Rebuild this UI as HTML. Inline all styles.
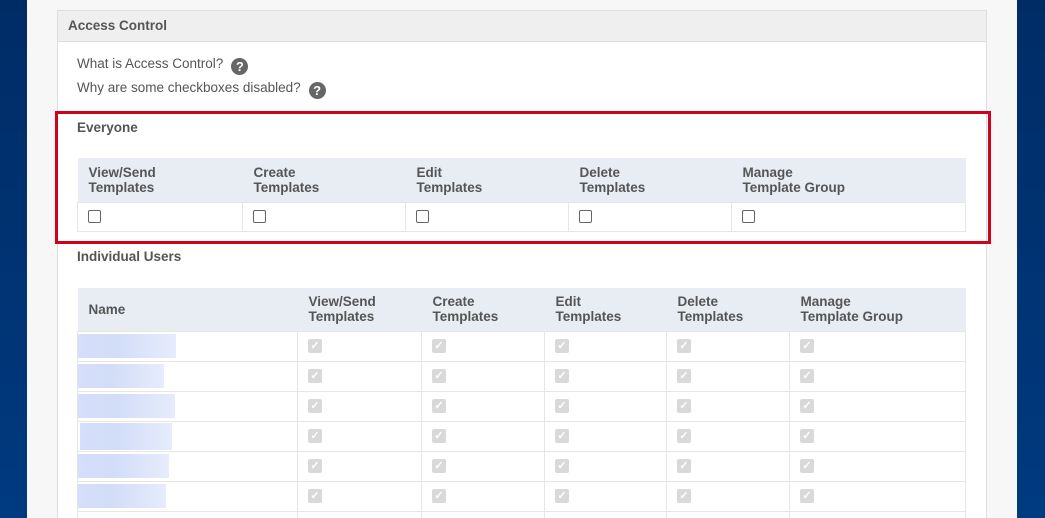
<!DOCTYPE html>
<html><head><meta charset="utf-8"><style>
*{box-sizing:border-box;margin:0;padding:0}
html,body{width:1045px;height:518px;overflow:hidden}
body{position:relative;font-family:"Liberation Sans",sans-serif;color:#555;font-size:13.5px;background:#003270}
.bgl{position:absolute;left:0;top:0;width:27px;height:518px;background:linear-gradient(#002c66,#003a80)}
.bgr{position:absolute;left:1017px;top:0;width:28px;height:518px;background:linear-gradient(#002c66,#003a80)}
.main{position:absolute;left:27px;top:0;width:990px;height:518px;background:#f7f7f7;overflow:hidden}
.panel{position:absolute;left:57px;top:10px;width:930px;height:508px;background:#fff;border:1px solid #ddd;border-bottom:none}
.ph{position:absolute;left:57px;top:10px;width:930px;height:32px;background:#efefef;border:1px solid #ddd;font-weight:bold;font-size:13.5px;padding:7px 10px;color:#555}
.t{position:absolute;font-size:13.5px;color:#555}
.q{display:inline-block;width:17px;height:17px;border-radius:50%;background:#666;color:#fff;font-weight:bold;font-size:13px;text-align:center;line-height:17px;vertical-align:-3px;margin-left:8px}
.red{position:absolute;left:55px;top:111px;width:936px;height:133px;border:3px solid #d0021b}
.b{font-weight:bold;font-size:13.5px;color:#555}
.tbl{position:absolute;left:77px;width:889px;border-collapse:collapse}
.tbl th{background:#e8edf4;text-align:left;font-weight:bold;font-size:13.5px;color:#555;padding:0 11px;line-height:15px;vertical-align:middle}
.tbl td{border:1px solid #e6e6e6;padding:0 10px;vertical-align:middle}
.cb{width:13px;height:13px;border:1px solid #666;border-radius:2px;display:block}
.dc{width:14px;height:14px;background:#d9d9d9;border-radius:2px;display:block;color:#fff;font-size:11px;line-height:14px;text-align:center;font-weight:bold}
.nm{height:24px;background:linear-gradient(90deg,#d5defa,#d2ddf8 40%,#e6ecfb);}
</style></head><body>
<div class="bgl"></div><div class="bgr"></div><div class="main"></div>
<div class="panel"></div>
<div class="ph">Access Control</div>
<div class="t" style="left:77px;top:56px">What is Access Control?<span class="q">?</span></div>
<div class="t" style="left:77px;top:80px">Why are some checkboxes disabled?<span class="q">?</span></div>
<div class="red"></div>
<div class="t b" style="left:77px;top:120px">Everyone</div>
<table class="tbl" style="top:158px">
<tr style="height:44px"><th style="width:165px">View/Send<br>Templates</th><th style="width:163px">Create<br>Templates</th><th style="width:163px">Edit<br>Templates</th><th style="width:163px">Delete<br>Templates</th><th>Manage<br>Template Group</th></tr>
<tr style="height:29px"><td><span class="cb"></span></td><td><span class="cb"></span></td><td><span class="cb"></span></td><td><span class="cb"></span></td><td><span class="cb"></span></td></tr>
</table>
<div class="t b" style="left:77px;top:249px">Individual Users</div>
<table class="tbl" style="top:288px">
<tr style="height:43px"><th style="width:220px">Name</th><th style="width:124px">View/Send<br>Templates</th><th style="width:123px">Create<br>Templates</th><th style="width:122px">Edit<br>Templates</th><th style="width:123px">Delete<br>Templates</th><th>Manage<br>Template Group</th></tr>
<tr style="height:30px"><td style="padding:0"><div class="nm" style="width:98px"></div></td><td><span class="dc">✓</span></td><td><span class="dc">✓</span></td><td><span class="dc">✓</span></td><td><span class="dc">✓</span></td><td><span class="dc">✓</span></td></tr>
<tr style="height:30px"><td style="padding:0"><div class="nm" style="width:86px"></div></td><td><span class="dc">✓</span></td><td><span class="dc">✓</span></td><td><span class="dc">✓</span></td><td><span class="dc">✓</span></td><td><span class="dc">✓</span></td></tr>
<tr style="height:30px"><td style="padding:0"><div class="nm" style="width:97px"></div></td><td><span class="dc">✓</span></td><td><span class="dc">✓</span></td><td><span class="dc">✓</span></td><td><span class="dc">✓</span></td><td><span class="dc">✓</span></td></tr>
<tr style="height:30px"><td style="padding:0"><div class="nm" style="width:92px;margin-left:2px;height:27px"></div></td><td><span class="dc">✓</span></td><td><span class="dc">✓</span></td><td><span class="dc">✓</span></td><td><span class="dc">✓</span></td><td><span class="dc">✓</span></td></tr>
<tr style="height:30px"><td style="padding:0"><div class="nm" style="width:91px"></div></td><td><span class="dc">✓</span></td><td><span class="dc">✓</span></td><td><span class="dc">✓</span></td><td><span class="dc">✓</span></td><td><span class="dc">✓</span></td></tr>
<tr style="height:30px"><td style="padding:0"><div class="nm" style="width:88px"></div></td><td><span class="dc">✓</span></td><td><span class="dc">✓</span></td><td><span class="dc">✓</span></td><td><span class="dc">✓</span></td><td><span class="dc">✓</span></td></tr>
<tr style="height:30px"><td></td><td></td><td></td><td></td><td></td><td></td></tr>
</table>
</body></html>
